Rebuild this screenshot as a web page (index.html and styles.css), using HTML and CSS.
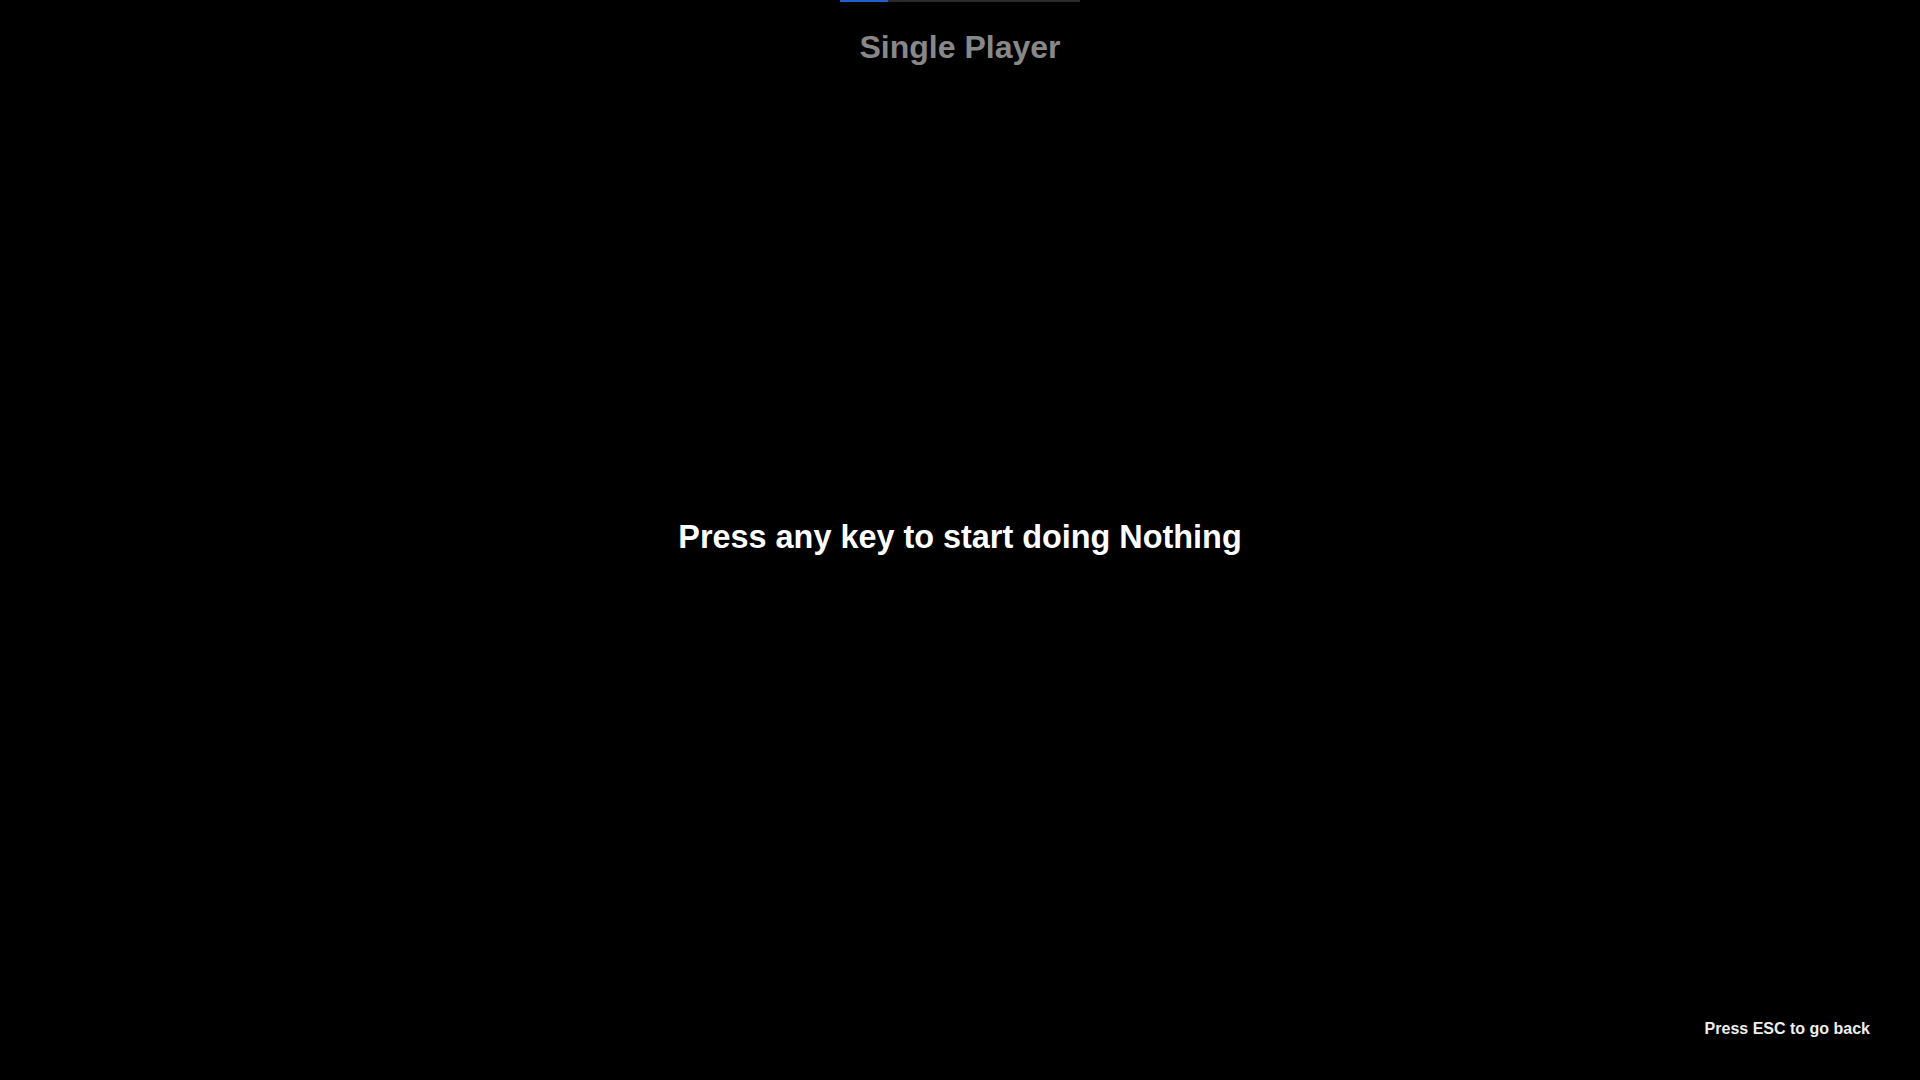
FILE: index.html
```html
<!DOCTYPE html>
<html lang="en">
<head>
<meta charset="utf-8">
<title>Single Player</title>
<link rel="stylesheet" href="styles.css">
</head>
<body>
<div class="screen">
  <header class="top">
    <div class="progress"><div class="progress-fill" style="width:20%"></div></div>
    <h1 class="title">Single Player</h1>
  </header>
  <main class="center">
    <p class="prompt">Press any key to start doing Nothing</p>
  </main>
  <div class="hint">Press ESC to go back</div>
</div>
</body>
</html>
```
FILE: styles.css
```css
html, body {
  margin: 0;
  padding: 0;
  background: #000;
  height: 100%;
}
body {
  font-family: "Liberation Sans", Arial, sans-serif;
  color: #fff;
  overflow: hidden;
}
.screen {
  position: relative;
  width: 100%;
  height: 100vh;
  display: flex;
  flex-direction: column;
  align-items: center;
}
.top {
  display: flex;
  flex-direction: column;
  align-items: center;
}
.progress {
  width: 240px;
  height: 2px;
  background: #2a2a2a;
}
.progress-fill {
  height: 100%;
  background: #1f5fd0;
}
.title {
  margin: 27px 0 0;
  font-size: 32px;
  line-height: 36px;
  font-weight: bold;
  color: #888;
}
.center {
  flex: 1;
  display: flex;
  align-items: center;
  justify-content: center;
  margin-top: -70px;
}
.prompt {
  margin: 0;
  font-size: 32.4px;
  font-weight: bold;
  color: #fff;
}
.hint {
  position: absolute;
  right: 50px;
  bottom: 42px;
  font-size: 16px;
  font-weight: bold;
  color: #eee;
}
```
